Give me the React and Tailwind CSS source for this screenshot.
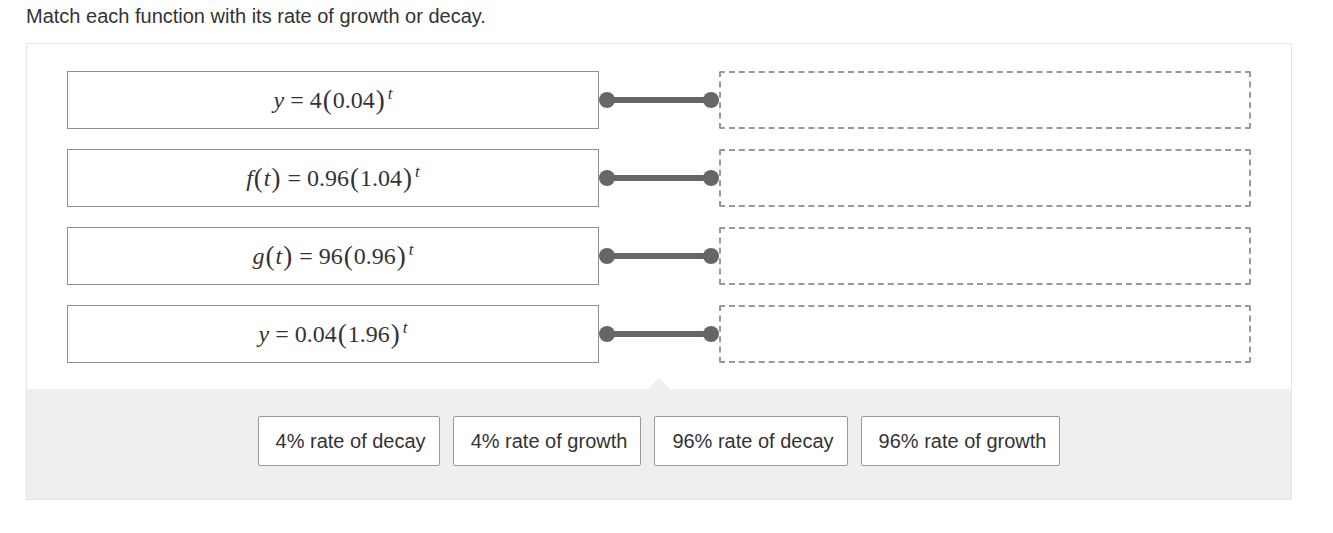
import React from "react";

const serif = { fontFamily: '"Liberation Serif", "DejaVu Serif", serif' };

function P({ children }) {
  return <span className="text-[27px] leading-none align-[-1px] mx-[1px]">{children}</span>;
}
function I({ children }) {
  return <span className="italic">{children}</span>;
}
function Eq() {
  return <span className="mx-[6px]">=</span>;
}
function Sup() {
  return <span className="italic text-[17px] leading-none align-[9px] ml-[2px]">t</span>;
}

const rows = [
  <>
    <I>y</I><Eq />4<P>(</P>0.04<P>)</P><Sup />
  </>,
  <>
    <I>f</I><P>(</P><I>t</I><P>)</P><Eq />0.96<P>(</P>1.04<P>)</P><Sup />
  </>,
  <>
    <I>g</I><P>(</P><I>t</I><P>)</P><Eq />96<P>(</P>0.96<P>)</P><Sup />
  </>,
  <>
    <I>y</I><Eq />0.04<P>(</P>1.96<P>)</P><Sup />
  </>,
];

const chips = ["4% rate of decay", "4% rate of growth", "96% rate of decay", "96% rate of growth"];

export default function App() {
  return (
    <div className="w-[1333px] h-[533px] bg-white text-[#333]" style={{ fontFamily: '"Liberation Sans", Arial, sans-serif' }}>
      <div className="pl-[26px] pt-[5px] h-[43px] text-[20px] leading-[23px]">
        Match each function with its rate of growth or decay.
      </div>
      <div className="ml-[26px] w-[1266px] border border-[#e6e6e6]">
        <div className="flex flex-col gap-[20px] px-[40px] pt-[27px] pb-[26px]">
          {rows.map((r, i) => (
            <div key={i} className="flex items-center">
              <div
                className="w-[532px] h-[58px] border border-[#8f8f8f] flex items-center justify-center text-[24px] text-[#333]"
                style={serif}
              >
                <span className="whitespace-nowrap">{r}</span>
              </div>
              <div className="w-[120px] flex items-center">
                <div className="w-[16px] h-[16px] rounded-full bg-[#666]" />
                <div className="flex-1 h-[6px] bg-[#666] -mx-[2px]" />
                <div className="w-[16px] h-[16px] rounded-full bg-[#666]" />
              </div>
              <div className="w-[532px] h-[58px] border-2 border-dashed border-[#999] rounded-[2px]" />
            </div>
          ))}
        </div>
        <div className="relative bg-[#efefef] h-[110px] flex justify-center gap-[13px] pt-[27px]">
          <div className="absolute left-1/2 -translate-x-1/2 -top-[11px] w-0 h-0 border-l-[11px] border-r-[11px] border-b-[11px] border-l-transparent border-r-transparent border-b-[#efefef]" />
          {chips.map((c) => (
            <div
              key={c}
              className="h-[50px] pl-[17px] pr-[13px] bg-white border border-[#999] rounded-[2px] flex items-center text-[20px] text-[#333] whitespace-nowrap"
            >
              {c}
            </div>
          ))}
        </div>
      </div>
    </div>
  );
}
